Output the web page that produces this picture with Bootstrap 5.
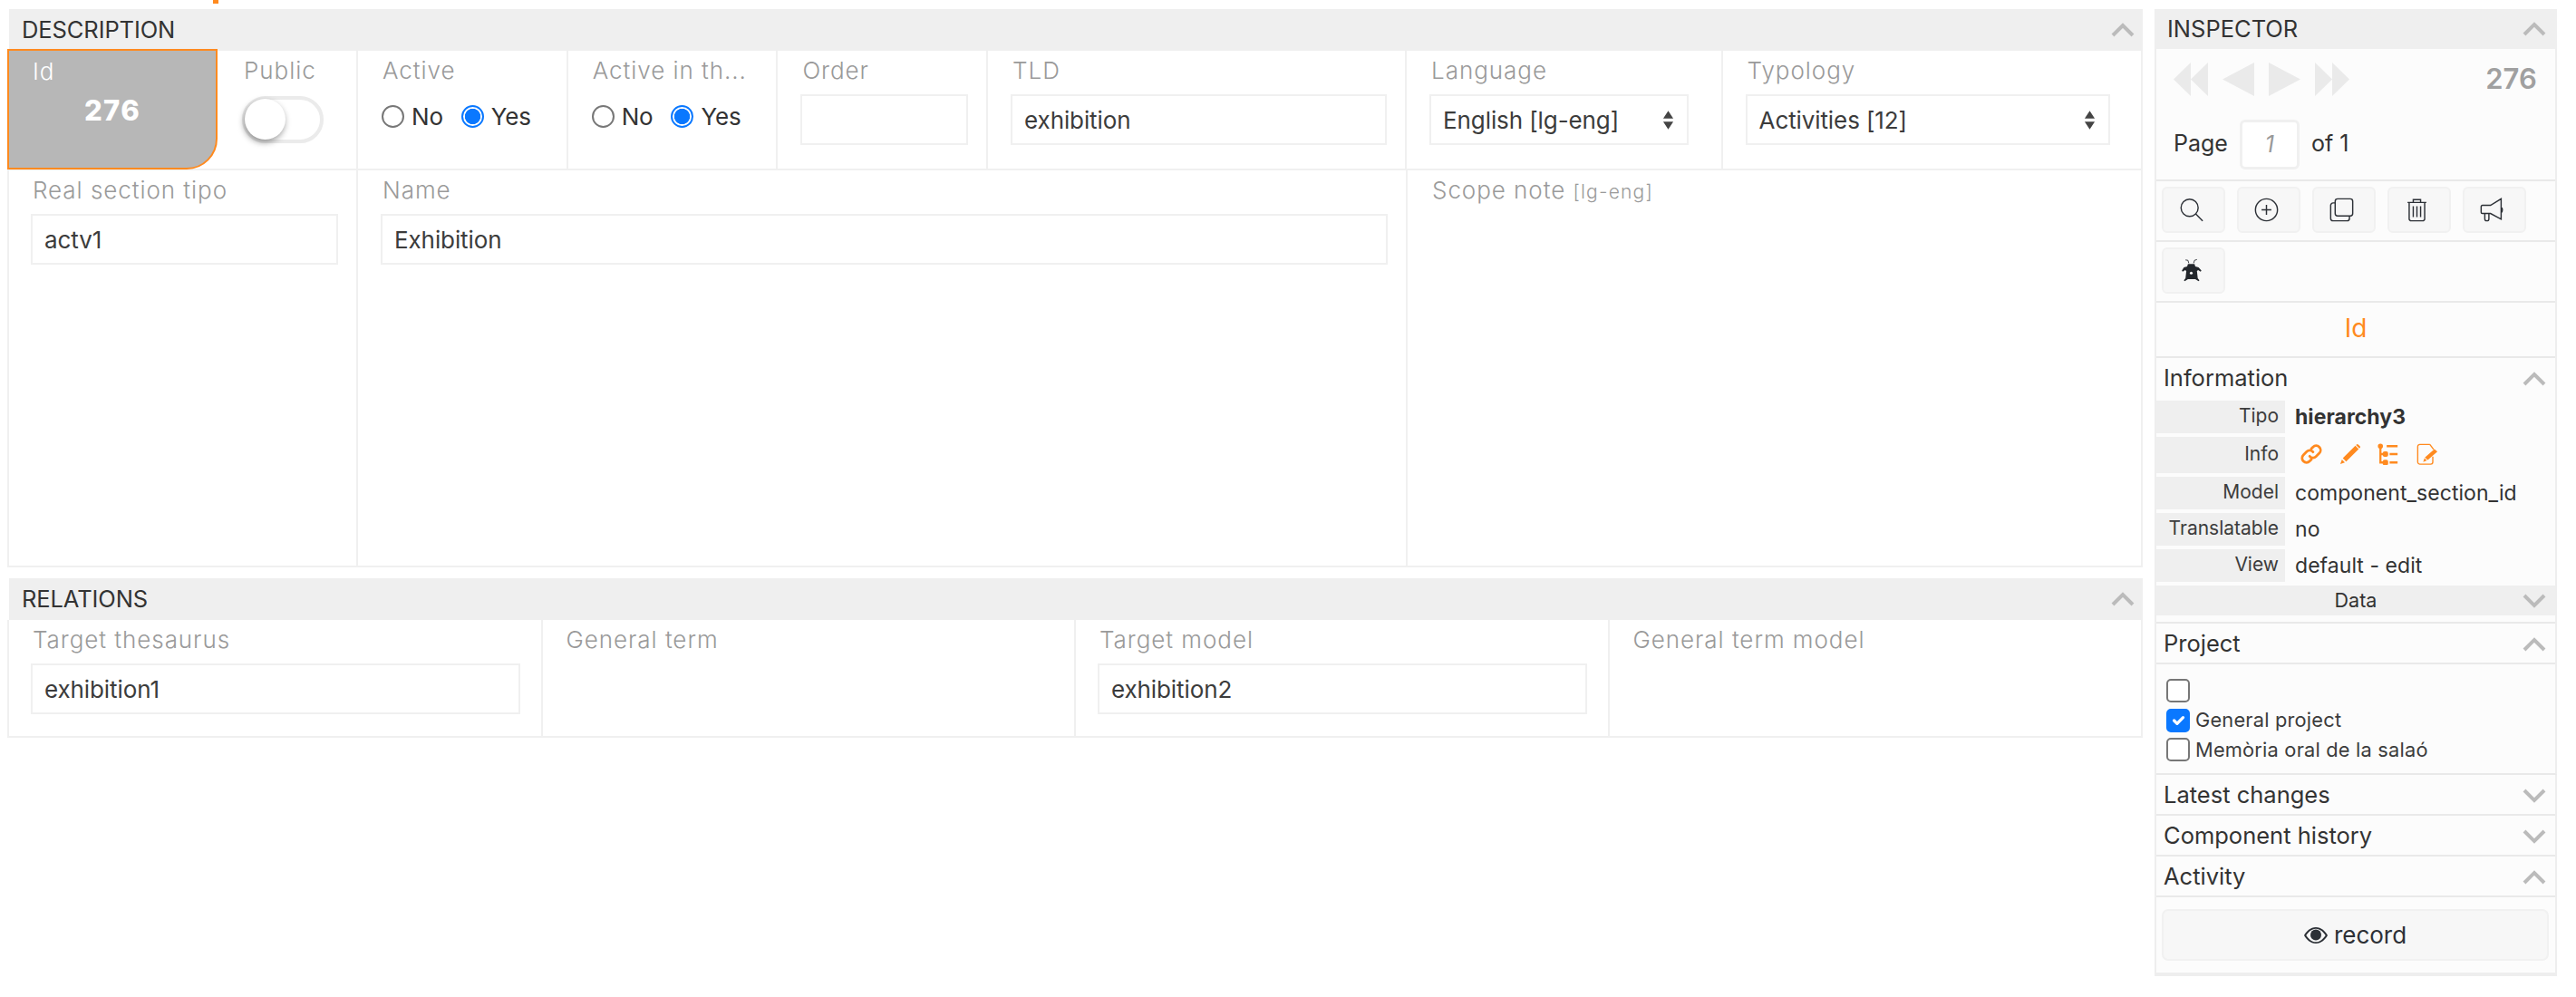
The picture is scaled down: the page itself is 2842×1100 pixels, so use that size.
<!DOCTYPE html>
<html lang="en">
<head>
<meta charset="utf-8">
<title>Section</title>
<link rel="stylesheet" href="https://cdn.jsdelivr.net/npm/bootstrap@5.3.0/dist/css/bootstrap.min.css">
<style>
:root{--line:#f0f0f0;--hdr:#efefef;--ink:#333;--lbl:#9a9a9a;--org:#ff8a1f;}
html,body{height:1100px;overflow:hidden;background:#fff;}
body{font-family:Inter,"Noto Sans",sans-serif;color:var(--ink);font-size:25px;position:relative;}
.tick{position:absolute;left:235px;top:0;width:6px;height:4px;background:var(--org);}
.page-wrap{padding:10px 21px 0 8px;gap:13px;}
.main-col{width:2356px;flex:none;}
.sect-hdr{height:46px;margin-left:2px;background:var(--hdr);padding:0 9px 0 14px;font-size:25.5px;letter-spacing:-.1px;}
.chev{width:26px;height:18px;fill:none;stroke:#bbb;stroke-width:4;flex:none;}
.sect-body{border:2px solid var(--line);border-top:0;}
.rel-sect{margin-top:12px;}
.row-a{height:132px;border-bottom:2px solid var(--line);}
.row-b{height:436px;}
.row-c{height:128px;}
.cell{border-right:2px solid var(--line);padding:0 20px 0 25px;min-width:0;flex:none;}
.cell:last-child{border-right:0;}
.row-a .cell{height:130px;}
.lbl-txt{height:48px;line-height:44px;padding-left:2px;color:var(--lbl);font-size:26px;font-weight:300;letter-spacing:.95px;white-space:nowrap;}
.lbl-txt small{font-size:21px;letter-spacing:1.2px;}
.w-id{width:232px;margin:-2px 0 0 -2px;height:133px!important;background:#b7b7b7;border:2px solid var(--org);border-bottom-right-radius:34px;color:#fff;padding:0 0 0 26px;}
.w-id .lbl-txt{color:#fff;height:46px;padding:0;line-height:46px;}
.id-num{font-weight:800;font-size:31px;text-align:center;line-height:40px;padding-right:26px;letter-spacing:1.4px;}
.w-pub{width:155px;padding-left:27px;}
.w-act{width:231.7px;}
.w-tld{width:462px;}
.w-lang{width:348.5px;padding-right:36px;}
.w-typo{width:462px;padding-right:35px;}
.w-real{width:385px;padding-left:24px;}
.w-name{width:1158px;}
.w-scope{width:809px;}
.w-rel{width:588.5px;padding-left:24px;padding-right:23px;}
.form-control,.form-select{height:56px;border:2px solid var(--line);border-radius:0;font-size:26px;color:#3c3c3c;padding:1px 13px 0;box-shadow:none;font-family:inherit;letter-spacing:-.1px;}
.form-select{background-image:url("data:image/svg+xml,%3Csvg xmlns='http://www.w3.org/2000/svg' viewBox='0 0 14 22'%3E%3Cpath fill='%23444' d='M7 0l6 9H1zM7 22L1 13h12z'/%3E%3C/svg%3E");background-size:13px 21px;background-position:right 14px center;}
.tog{appearance:none;display:block;width:90px;height:52px;margin:2px 0 0 0;border:4px solid #ebebeb;border-radius:26px;background:#fff;position:relative;}
.tog::before{content:"";position:absolute;left:-1px;top:-1px;width:45px;height:45px;border-radius:50%;background:#fff;box-shadow:-1px 3px 7px rgba(0,0,0,.4);}
.radio-line{height:50px;margin-top:-1px;gap:8px;font-size:26px;letter-spacing:-.2px;}
.radio-line .form-check-input{width:25px;height:25px;margin:0 0 0 1px;border:2px solid #777;background-color:#fff;flex:none;}
.radio-line .form-check-input:checked{border-color:#0a78ff;background-image:radial-gradient(circle,#0a78ff 0 56%,#fff 60%);}
.radio-line label{margin-right:11px;}
.insp{width:444px;flex:none;}
.insp-hdr{height:44px;background:var(--hdr);padding:0 12px 0 14px;font-size:25.5px;}
.insp-body{border:solid #eee;border-width:0 2px;background:#fcfcfc;}
.blk{border-bottom:2px solid #e9e9e9;}
.pager{height:146px;padding:10px 20px 0 19px;}
.arrows{gap:16px;}
.arrows svg{fill:#eaeaea;height:37px;display:block;}
.rec-id{font-weight:600;font-size:31px;color:#a0a0a0;letter-spacing:.1px;}
.page-row{margin-top:21px;gap:13px;font-size:25px;}
.page-in{width:66px;height:55px;border:3px solid #f0f0f0;border-radius:6px;background:#fff;text-align:center;font-style:italic;color:#999;font-size:25px;padding:0;font-family:inherit;}
.tool-row{height:67px;padding:6px 6px 0;gap:13px;}
.btn-tool{width:70px;height:51px;padding:0 6px 0 0;background:#f7f7f7;border:2px solid #f1f1f1;border-radius:6px;}
.btn-tool svg{width:27px;height:27px;display:block;margin:auto;fill:none;stroke:#2c3036;stroke-width:1.6;}
.comp-name{height:61px;color:var(--org);font-size:28px;padding-bottom:3px;}
.pane-hdr{height:45px;padding:2px 10px 0 8px;font-size:25.5px;}
.pane-hdr.tight{height:47px;padding:0 10px 2px 8px;}
.kv{margin-bottom:4px;height:36px;font-size:23px;letter-spacing:.05px;}
.kv.tall{height:40px;}
.kv dt{width:142px;height:100%;flex:none;background:var(--hdr);font-weight:400;text-align:right;padding:0 7px 2px 0;color:#3c3c3c;font-size:21px;letter-spacing:0;}
.kv dd{margin:0 0 0 11px;color:#333;}
.kv.tall dd{margin-top:-2px;}
.ico-row{gap:18.500px;padding-left:6px;}
.ico-row svg{width:24px;height:24px;display:block;fill:none;stroke:var(--org);}
.data-bar{height:33px;background:var(--hdr);font-size:21.5px;padding-left:0;position:relative;}
.data-bar .chev{position:absolute;right:10px;top:8px;}
.info-blk{padding-bottom:7px;}
.info-blk dl{margin:0;}
.chk-blk{height:122px;padding:13px 0 0 11px;border-right:2px solid #eee;margin-right:-2px;}
.chk-line{height:32.5px;gap:6px;font-size:21.8px;letter-spacing:.2px;color:#3c3c3c;}
.chk-line .form-check-input{width:26px;height:26px;margin:0;border:2px solid #777;border-radius:5px;flex:none;}
.chk-line .form-check-input:checked{background-color:#0a78ff;border-color:#0a78ff;}
.act-blk{height:87px;padding:13px 7px 0 6px;border-bottom:4px solid #eee;}
.btn-record{height:57px;width:100%;background:#f7f7f7;border:2px solid #f1f1f1;border-radius:7px;font-size:26px;color:#2c3036;gap:7px;padding:0;}
.btn-record svg{width:26px;height:18px;fill:#2c3036;}
</style>
</head>
<body>
<div class="tick"></div>
<div class="page-wrap d-flex align-items-start">
  <main class="main-col">
    <section>
      <div class="sect-hdr d-flex align-items-center justify-content-between"><span>DESCRIPTION</span><svg class="chev" viewBox="0 0 26 18"><path d="M2 15L13 4l11 11"/></svg></div>
      <div class="sect-body">
        <div class="row-a d-flex">
          <div class="cell w-id"><div class="lbl-txt">Id</div><div class="id-num">276</div></div>
          <div class="cell w-pub"><div class="lbl-txt">Public</div><input class="tog" type="checkbox" aria-label="Public"></div>
          <div class="cell w-act"><div class="lbl-txt">Active</div>
            <div class="radio-line d-flex align-items-center"><input class="form-check-input" type="radio" name="a1" id="a1n"><label for="a1n">No</label><input class="form-check-input" type="radio" name="a1" id="a1y" checked><label for="a1y">Yes</label></div></div>
          <div class="cell w-act"><div class="lbl-txt">Active in th...</div>
            <div class="radio-line d-flex align-items-center"><input class="form-check-input" type="radio" name="a2" id="a2n"><label for="a2n">No</label><input class="form-check-input" type="radio" name="a2" id="a2y" checked><label for="a2y">Yes</label></div></div>
          <div class="cell w-act"><div class="lbl-txt">Order</div><input class="form-control" type="text" aria-label="Order"></div>
          <div class="cell w-tld"><div class="lbl-txt">TLD</div><input class="form-control" type="text" value="exhibition" aria-label="TLD"></div>
          <div class="cell w-lang"><div class="lbl-txt">Language</div><select class="form-select" aria-label="Language"><option>English [lg-eng]</option></select></div>
          <div class="cell w-typo flex-grow-1"><div class="lbl-txt">Typology</div><select class="form-select" aria-label="Typology"><option>Activities [12]</option></select></div>
        </div>
        <div class="row-b d-flex">
          <div class="cell w-real"><div class="lbl-txt">Real section tipo</div><input class="form-control" type="text" value="actv1" aria-label="Real section tipo"></div>
          <div class="cell w-name"><div class="lbl-txt">Name</div><input class="form-control" type="text" value="Exhibition" aria-label="Name"></div>
          <div class="cell w-scope flex-grow-1"><div class="lbl-txt">Scope note <small>[lg-eng]</small></div></div>
        </div>
      </div>
    </section>
    <section class="rel-sect">
      <div class="sect-hdr d-flex align-items-center justify-content-between"><span>RELATIONS</span><svg class="chev" viewBox="0 0 26 18"><path d="M2 15L13 4l11 11"/></svg></div>
      <div class="sect-body">
        <div class="row-c d-flex">
          <div class="cell w-rel"><div class="lbl-txt">Target thesaurus</div><input class="form-control" type="text" value="exhibition1" aria-label="Target thesaurus"></div>
          <div class="cell w-rel"><div class="lbl-txt">General term</div></div>
          <div class="cell w-rel"><div class="lbl-txt">Target model</div><input class="form-control" type="text" value="exhibition2" aria-label="Target model"></div>
          <div class="cell w-rel flex-grow-1"><div class="lbl-txt">General term model</div></div>
        </div>
      </div>
    </section>
  </main>

  <aside class="insp">
    <div class="insp-hdr d-flex align-items-center justify-content-between"><span>INSPECTOR</span><svg class="chev" viewBox="0 0 26 18"><path d="M2 15L13 4l11 11"/></svg></div>
    <div class="insp-body">
      <div class="blk pager">
        <div class="d-flex align-items-center justify-content-between">
          <div class="arrows d-flex">
            <svg width="38" viewBox="0 0 38 37"><path d="M19 0v37L0 18.500zM38 0v37L19 18.500z"/></svg>
            <svg width="35" viewBox="0 0 35 37"><path d="M35 0v37L0 18.500z"/></svg>
            <svg width="35" viewBox="0 0 35 37"><path d="M0 0v37l35-18.500z"/></svg>
            <svg width="38" viewBox="0 0 38 37"><path d="M0 0v37l19-18.500zM19 0v37l19-18.500z"/></svg>
          </div>
          <span class="rec-id">276</span>
        </div>
        <div class="page-row d-flex align-items-center"><span>Page</span><input class="page-in" type="text" value="1" aria-label="Page"><span>of 1</span></div>
      </div>
      <div class="blk tool-row d-flex">
        <button class="btn btn-tool" type="button" aria-label="Search"><svg viewBox="0 0 30 30"><circle cx="13" cy="12.500" r="10.500"/><path d="M20.500 20l8.500 8.500"/></svg></button>
        <button class="btn btn-tool" type="button" aria-label="New"><svg viewBox="0 0 30 30"><circle cx="15" cy="15" r="13.500"/><path d="M15 9v12M9 15h12"/></svg></button>
        <button class="btn btn-tool" type="button" aria-label="Duplicate"><svg viewBox="0 0 30 30"><rect x="7" y="1.500" width="21.500" height="21" rx="3"/><path d="M7 6.500H4.500a3 3 0 0 0-3 3v16a3 3 0 0 0 3 3h17a3 3 0 0 0 3-3v-3"/></svg></button>
        <button class="btn btn-tool" type="button" aria-label="Delete"><svg viewBox="0 0 30 30"><path d="M3.500 6h23M10.500 6V2.500h9V6M5.500 6v20a2.500 2.500 0 0 0 2.500 2.500h14a2.500 2.500 0 0 0 2.500-2.500V6M10.500 10.500v13.500M15 10.500v13.500M19.500 10.500v13.500"/></svg></button>
        <button class="btn btn-tool" type="button" aria-label="Announce"><svg viewBox="0 0 30 30"><path d="M3 9.500h10l13-8v25l-13-7H3a1.500 1.500 0 0 1-1.500-1.500v-7A1.500 1.500 0 0 1 3 9.500zM26 11.500c2 1 2 6 0 7M6 19.500v6.500a2.500 2.500 0 0 0 5 0V19.500"/></svg></button>
      </div>
      <div class="blk tool-row d-flex">
        <button class="btn btn-tool" type="button" aria-label="Debug"><svg viewBox="0 0 30 30"><path style="fill:#23272c;stroke:none" d="M11 7h8l1 3 4 1 3.500 4-1 1.500-3-2-1.500 1 1 9 2 2.500-1 1-4-2.500h-9l-4 2.500-1-1 2-2.500 1-9-1.500-1-3 2-1-1.500L6 11l4-1z"/><circle cx="15" cy="18" r="1.700" style="fill:#fff;stroke:none"/><path style="stroke-width:1" d="M12 6L11 2.500 8 2M18 6l1-3.500L22 1.500"/></svg></button>
      </div>
      <div class="blk comp-name d-flex align-items-center justify-content-center">Id</div>

      <div class="blk info-blk">
        <div class="pane-hdr tight d-flex align-items-center justify-content-between"><span>Information</span><svg class="chev" viewBox="0 0 26 18"><path d="M2 15L13 4l11 11"/></svg></div>
        <dl>
          <div class="kv d-flex align-items-center"><dt class="d-flex align-items-center justify-content-end">Tipo</dt><dd class="fw-bold">hierarchy3</dd></div>
          <div class="kv tall d-flex align-items-center"><dt class="d-flex align-items-center justify-content-end">Info</dt><dd>
            <div class="ico-row d-flex align-items-center">
              <svg viewBox="0 0 26 26" stroke-width="3" stroke-linecap="round"><path d="M11 15.500a5 5 0 0 0 7.500.5l4-4a5.300 5.300 0 0 0-7.500-7.500l-2 2"/><path d="M15 10.500a5 5 0 0 0-7.500-.5l-4 4a5.300 5.300 0 0 0 7.500 7.500l2-2"/></svg>
              <svg viewBox="0 0 26 26"><path style="fill:#ff8a1f;stroke:none" d="M19 3l4 4L8 22l-4-4zM20.500 1.500a1.500 1.500 0 0 1 2 0l2 2a1.500 1.500 0 0 1 0 2l-.7.7-4-4zM3 19.500L6.500 23 1 25z"/></svg>
              <svg viewBox="0 0 26 26" stroke-width="2.500"><circle style="fill:#ff8a1f" cx="3.500" cy="3.500" r="1.800"/><path d="M3.500 4v19h5M3.500 13h5M11 3.500h13M14.500 13h9.500M14.500 23h9.500"/><rect style="fill:#ff8a1f" x="7.500" y="11" width="4" height="4" rx="1"/><rect style="fill:#ff8a1f" x="7.500" y="21" width="4" height="4" rx="1"/></svg>
              <svg viewBox="0 0 26 26" stroke-width="1.500"><path d="M16 1.500H4A2.500 2.500 0 0 0 1.500 4v19A2.500 2.500 0 0 0 4 25h13a2.500 2.500 0 0 0 2.500-2.500v-6.500M16 1.500l4.500 6"/><path style="fill:#ff8a1f;stroke:none" d="M21.500 7l3.500 3L13.500 20l-3.500-3zM9.500 18l3 2.500-4.500 2z"/></svg>
            </div></dd></div>
          <div class="kv d-flex align-items-center"><dt class="d-flex align-items-center justify-content-end">Model</dt><dd>component_section_id</dd></div>
          <div class="kv d-flex align-items-center"><dt class="d-flex align-items-center justify-content-end">Translatable</dt><dd>no</dd></div>
          <div class="kv d-flex align-items-center"><dt class="d-flex align-items-center justify-content-end">View</dt><dd>default - edit</dd></div>
        </dl>
        <div class="data-bar d-flex align-items-center justify-content-center">Data<svg class="chev" viewBox="0 0 26 18"><path d="M2 3l11 11L24 3"/></svg></div>
      </div>

      <div class="blk pane-hdr d-flex align-items-center justify-content-between"><span>Project</span><svg class="chev" viewBox="0 0 26 18"><path d="M2 15L13 4l11 11"/></svg></div>
      <div class="blk chk-blk">
        <div class="chk-line d-flex align-items-center"><input class="form-check-input" type="checkbox" aria-label="Empty project"></div>
        <div class="chk-line d-flex align-items-center"><input class="form-check-input" type="checkbox" id="p1" checked><label for="p1">General project</label></div>
        <div class="chk-line d-flex align-items-center"><input class="form-check-input" type="checkbox" id="p2"><label for="p2">Memòria oral de la salaó</label></div>
      </div>
      <div class="blk pane-hdr d-flex align-items-center justify-content-between"><span>Latest changes</span><svg class="chev" viewBox="0 0 26 18"><path d="M2 3l11 11L24 3"/></svg></div>
      <div class="blk pane-hdr d-flex align-items-center justify-content-between"><span>Component history</span><svg class="chev" viewBox="0 0 26 18"><path d="M2 3l11 11L24 3"/></svg></div>
      <div class="blk pane-hdr d-flex align-items-center justify-content-between"><span>Activity</span><svg class="chev" viewBox="0 0 26 18"><path d="M2 15L13 4l11 11"/></svg></div>
      <div class="act-blk">
        <button class="btn btn-record d-flex align-items-center justify-content-center" type="button"><svg viewBox="0 0 26 18"><path fill-rule="evenodd" d="M13 0c6 0 10.500 4.500 13 9-2.500 4.500-7 9-13 9S2.500 13.500 0 9c2.500-4.500 7-9 13-9zM2.300 9C4.500 12.500 8.300 16.300 13 16.300S21.500 12.500 23.700 9C21.500 5.500 17.700 1.700 13 1.700S4.500 5.500 2.300 9z"/><circle cx="13" cy="8.500" r="6"/></svg>record</button>
      </div>
    </div>
  </aside>
</div>
</body>
</html>
